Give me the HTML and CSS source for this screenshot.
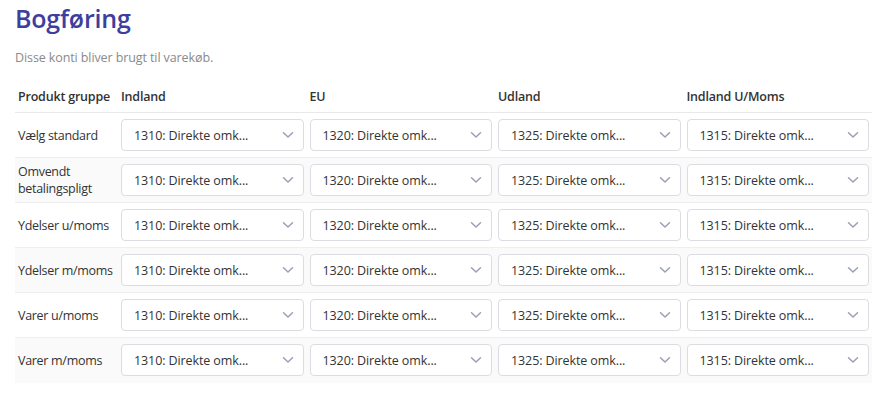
FILE: index.html
```html
<!DOCTYPE html>
<html lang="da">
<head>
    <meta charset="UTF-8">
    <meta name="viewport" content="width=device-width, initial-scale=1.0">
    <title>Bogføring</title>
    <link rel="stylesheet" href="styles.css">
</head>
<body>
    <div class="page">
        <h1 class="title">Bogføring</h1>
        <p class="lead">Disse konti bliver brugt til varekøb.</p>

        <table class="accounts">
            <thead>
                <tr>
                    <th class="label-col">Produkt gruppe</th>
                    <th>Indland</th>
                    <th>EU</th>
                    <th>Udland</th>
                    <th>Indland U/Moms</th>
                </tr>
            </thead>
            <tbody id="rows"></tbody>
        </table>
    </div>

    <script>
        const groups = [
            "Vælg standard",
            "Omvendt betalingspligt",
            "Ydelser u/moms",
            "Ydelser m/moms",
            "Varer u/moms",
            "Varer m/moms"
        ];
        const accounts = ["1310", "1320", "1325", "1315"];

        const chevron = '<svg class="chevron" width="12" height="8" viewBox="0 0 12 8">' +
            '<path d="M1.5 1.8 L6 6 L10.5 1.8" fill="none" stroke="#9aa0b4" stroke-width="1.5" stroke-linecap="round" stroke-linejoin="round"/></svg>';

        let tbody = document.getElementById("rows");

        groups.forEach(function (name) {
            let row = document.createElement("tr");
            let html = '<td class="label-col">' + name + '</td>';
            accounts.forEach(function (acc) {
                html += '<td><div class="select-wrap"><select class="account-select">' +
                    '<option>' + acc + ': Direkte omk...</option></select>' + chevron + '</div></td>';
            });
            row.innerHTML = html;
            tbody.appendChild(row);
        });
    </script>
</body>
</html>
```

FILE: styles.css
```css
* {
    margin: 0;
    padding: 0;
    box-sizing: border-box;
}

body {
    font-family: 'Open Sans', 'Noto Sans', Arial, sans-serif;
    color: #333;
    background: #fff;
}

.page {
    padding: 2px 14px 0 15px;
}

.title {
    font-size: 25px;
    font-weight: 600;
    color: #3d3e9e;
    line-height: 32px;
    letter-spacing: -0.2px;
}

.lead {
    margin-top: 15px;
    font-size: 12.5px;
    color: #8a8a8a;
    line-height: 18px;
    letter-spacing: -0.1px;
}

.accounts {
    margin-top: 17px;
    width: 100%;
    border-collapse: collapse;
    table-layout: fixed;
}

.accounts th {
    text-align: left;
    font-size: 12.5px;
    font-weight: 600;
    color: #333;
    padding: 4px 3px 7px 3px;
    border-bottom: 1px solid #e9e9ec;
    letter-spacing: -0.2px;
}

.accounts td {
    height: 45px;
    padding: 0 3px;
    font-size: 12.5px;
    line-height: 17px;
    border-bottom: 1px solid #efeff1;
}

.accounts tbody tr:last-child td {
    border-bottom: none;
}

.accounts tbody tr:nth-child(even) {
    background: #fafafa;
}

.label-col {
    width: 103px;
    letter-spacing: -0.3px;
}

.select-wrap {
    position: relative;
}

.account-select {
    appearance: none;
    -webkit-appearance: none;
    width: 100%;
    height: 32px;
    padding: 0 28px 0 12px;
    font-family: inherit;
    font-size: 12.5px;
    color: #333;
    background: #fff;
    border: 1px solid #dcdde3;
    border-radius: 4px;
    outline: none;
    letter-spacing: -0.1px;
}

.chevron {
    position: absolute;
    right: 10px;
    top: 12px;
    pointer-events: none;
}
```
